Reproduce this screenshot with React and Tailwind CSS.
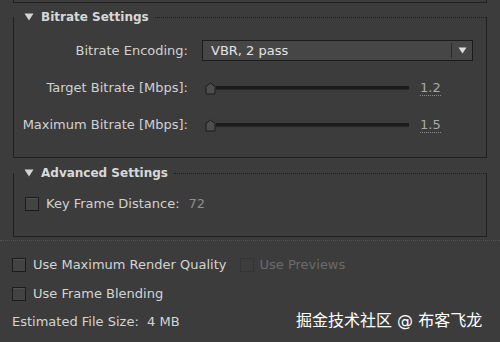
import React from 'react'

const FONT = { fontFamily: '"DejaVu Sans", "Noto Sans CJK SC", sans-serif' }

function Tri() {
  return (
    <svg width="10" height="8" viewBox="0 0 10 8" className="shrink-0">
      <path d="M0.5 0.5 L9.5 0.5 L5 7.5 Z" fill="#d4d4d4" />
    </svg>
  )
}

function Check({ dim }) {
  return (
    <div className={`w-[14px] h-[14px] shrink-0 border ${dim ? 'border-[#343434] bg-[#3d3d3d]' : 'border-[#1c1c1c] bg-[#434343] shadow-[inset_0_1px_0_#515151]'}`} />
  )
}

function Thumb() {
  return (
    <svg width="11" height="13" viewBox="0 0 11 13" className="shrink-0">
      <path d="M1 4.5 L5.5 1 L10 4.5 L10 12 L1 12 Z" fill="#4e4e4e" stroke="#1a1a1a" strokeWidth="1" />
    </svg>
  )
}

function SliderRow({ label, value }) {
  return (
    <div className="flex items-center h-[20px]">
      <div className="w-[174px] text-right text-[13px] text-[#d2d2d2]">{label}</div>
      <div className="ml-[17px] flex items-center">
        <Thumb />
        <div className="w-[193px] h-[4px] bg-[#1b1b1b] border-b border-[#262626]" />
      </div>
      <div className="ml-[11px] text-[13px] text-[#a9a9a9] border-b border-dotted border-[#8a8a8a] leading-[14px]">{value}</div>
    </div>
  )
}

// fieldset-like box: title sits on the top edge, dotted rule runs after it
function Section({ title, children, className }) {
  return (
    <div className={`mx-[13px] w-[474px] flex flex-col border-l border-r border-b border-[#202020] ${className}`}>
      <div className="-mt-[9px] h-[18px] flex items-center">
        <div className="pl-[10px] pr-[7px]"><Tri /></div>
        <div className="text-[12px] font-bold text-[#d8d8d8]">{title}</div>
        <div className="flex-1 ml-[6px] border-t border-dotted border-[#1c1c1c]" />
      </div>
      {children}
    </div>
  )
}

export default function App() {
  return (
    <div className="relative w-[500px] h-[342px] overflow-hidden bg-[#3c3c3c]" style={FONT}>
      <div className="mx-[13px] w-[474px] h-[3px] border-l border-r border-b border-[#202020]" />

      <Section title="Bitrate Settings" className="mt-[14px] h-[141px]">
        <div className="flex items-center h-[21px] mt-[14px]">
          <div className="w-[174px] text-right text-[13px] text-[#d2d2d2]">Bitrate Encoding:</div>
          <div className="ml-[14px] w-[271px] h-[21px] flex items-center border border-[#1c1c1c] bg-[#464646]">
            <div className="flex-1 pl-[8px] text-[13px] text-[#e4e4e4]">VBR, 2 pass</div>
            <div className="w-px h-[15px] bg-[#2a2a2a]" />
            <div className="w-[20px] flex justify-center">
              <svg width="9" height="7" viewBox="0 0 9 7"><path d="M0.5 0.5 L8.5 0.5 L4.5 6.5 Z" fill="#dcdcdc" /></svg>
            </div>
          </div>
        </div>
        <div className="mt-[17px]"><SliderRow label="Target Bitrate [Mbps]:" value="1.2" /></div>
        <div className="mt-[17px]"><SliderRow label="Maximum Bitrate [Mbps]:" value="1.5" /></div>
      </Section>

      <Section title="Advanced Settings" className="mt-[15px] h-[64px]">
        <div className="flex items-center h-[16px] mt-[14px] pl-[11px]">
          <Check />
          <div className="ml-[7px] text-[13px] text-[#d2d2d2]">Key Frame Distance:</div>
          <div className="ml-[9px] text-[13px] text-[#8e8e8e]">72</div>
        </div>
      </Section>

      <div className="mt-[3px] border-t border-dotted border-[#555555]" />

      <div className="pl-[12px]">
        <div className="flex items-center h-[16px] mt-[16px]">
          <Check />
          <div className="ml-[7px] text-[13px] text-[#d4d4d4]">Use Maximum Render Quality</div>
          <div className="ml-[14px]"><Check dim /></div>
          <div className="ml-[5px] text-[13px] text-[#6b6b6b]">Use Previews</div>
        </div>
        <div className="flex items-center h-[16px] mt-[13px]">
          <Check />
          <div className="ml-[7px] text-[13px] text-[#d4d4d4]">Use Frame Blending</div>
        </div>
        <div className="mt-[10px] text-[13px] text-[#d4d4d4] whitespace-pre">Estimated File Size:  4 MB</div>
      </div>

      <div className="absolute left-[296px] top-[309px] text-[16px] text-white" style={FONT}>掘金技术社区 @ 布客飞龙</div>
    </div>
  )
}
